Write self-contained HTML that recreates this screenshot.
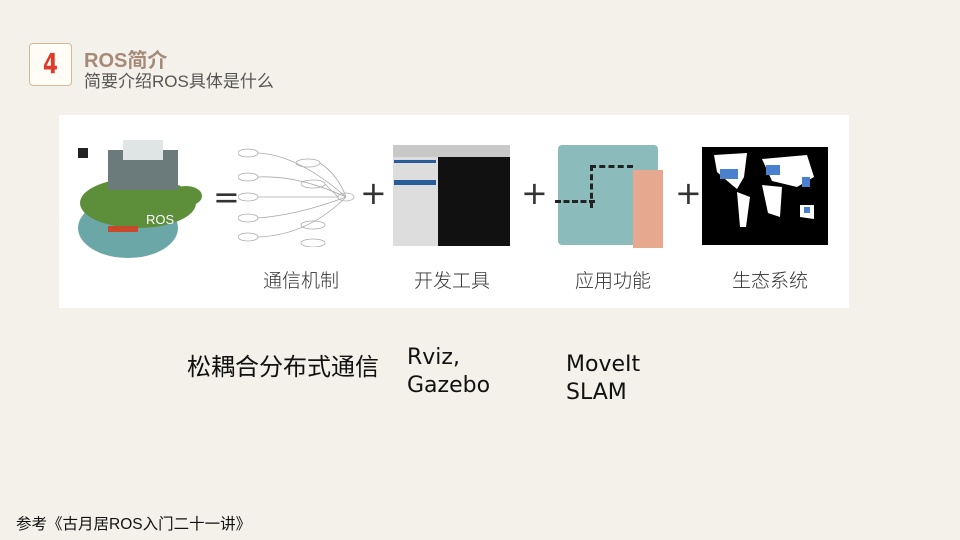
<!DOCTYPE html>
<html><head><meta charset="utf-8"><style>
body{margin:0;width:960px;height:540px;background:#f3f1ea;position:relative;overflow:hidden;font-family:"Liberation Sans","Noto Sans CJK SC",sans-serif}
.a{position:absolute}
.cap{position:absolute;top:266px;font-size:19px;color:#333;font-family:"Noto Sans CJK SC",sans-serif;font-weight:300}
.plus{position:absolute;top:176px;font-size:32px;color:#333;line-height:34px;font-family:"DejaVu Sans",sans-serif}
.big{position:absolute;font-size:22px;color:#111;line-height:28px;font-family:"DejaVu Sans","Noto Sans CJK SC",sans-serif}
</style></head><body>
<div class="a" style="left:29px;top:43px;width:41px;height:41px;background:#fffdf5;border:1px solid #d4b89a;border-radius:4px"></div>
<div class="a" style="left:29px;top:47px;width:43px;text-align:center;font-size:28px;font-weight:bold;color:#e03a2a;font-family:'DejaVu Sans Condensed','Liberation Sans',sans-serif;transform:scaleX(0.85)">4</div>
<div class="a" style="left:84px;top:44px;font-size:20px;font-weight:bold;color:#a58a7a">ROS简介</div>
<div class="a" style="left:84px;top:67px;font-size:17px;color:#555">简要介绍ROS具体是什么</div>

<div class="a" style="left:59px;top:115px;width:790px;height:193px;background:#fff"></div>
<!-- turtle -->
<svg class="a" style="left:68px;top:128px" width="140" height="136">
<ellipse cx="60" cy="100" rx="50" ry="30" fill="#6aa7a6"/>
<ellipse cx="70" cy="75" rx="58" ry="25" fill="#5d8f3a"/>
<ellipse cx="118" cy="68" rx="16" ry="10" fill="#5d8f3a"/>
<rect x="40" y="22" width="70" height="40" fill="#6b7a7a"/>
<rect x="55" y="12" width="40" height="20" fill="#dfe5e5"/>
<rect x="10" y="20" width="10" height="10" fill="#222"/>
<text x="78" y="96" font-size="13" fill="#fff" font-family="Liberation Sans">ROS</text>
<rect x="40" y="98" width="30" height="6" fill="#c94a2a"/>
</svg>
<div class="a" style="left:213px;top:178px;font-size:32px;color:#333;font-family:'DejaVu Sans',sans-serif">=</div>
<!-- graph -->
<svg class="a" style="left:238px;top:145px" width="120" height="102" stroke="#aaa" fill="none" stroke-width="0.8">
<ellipse cx="10" cy="8" rx="10" ry="4"/><ellipse cx="10" cy="32" rx="10" ry="4"/><ellipse cx="10" cy="52" rx="10" ry="4"/><ellipse cx="10" cy="73" rx="10" ry="4"/><ellipse cx="10" cy="92" rx="10" ry="4"/>
<ellipse cx="70" cy="18" rx="12" ry="4"/><ellipse cx="75" cy="39" rx="12" ry="4"/><ellipse cx="75" cy="80" rx="12" ry="4"/><ellipse cx="75" cy="98" rx="12" ry="4"/>
<ellipse cx="108" cy="52" rx="8" ry="4"/>
<path d="M20 8 Q60 10 108 52 M20 32 Q60 30 108 52 M20 52 L100 52 M20 73 Q60 70 108 52 M20 92 Q70 90 108 52 M82 18 Q100 30 108 52 M87 39 L100 52"/>
</svg>
<div class="plus" style="left:360px">+</div>
<!-- rviz -->
<div class="a" style="left:393px;top:145px;width:117px;height:101px;background:#ddd"></div>
<div class="a" style="left:393px;top:145px;width:117px;height:12px;background:#c8c8c8"></div>
<div class="a" style="left:394px;top:160px;width:42px;height:3px;background:#2a5c9a"></div>
<div class="a" style="left:394px;top:180px;width:42px;height:5px;background:#2a5c9a"></div>
<div class="a" style="left:438px;top:157px;width:72px;height:89px;background:#111"></div>
<!-- teal -->
<div class="a" style="left:558px;top:145px;width:100px;height:100px;background:#8bbcbb;border-radius:4px"></div>
<div class="a" style="left:590px;top:165px;width:40px;height:40px;border:3px dashed #222;border-right:none;border-bottom:none"></div>
<div class="a" style="left:555px;top:200px;width:40px;height:0;border-top:3px dashed #222"></div>
<div class="a" style="left:633px;top:170px;width:30px;height:78px;background:#e6a98f"></div>
<div class="plus" style="left:521px">+</div>
<div class="plus" style="left:675px">+</div>
<!-- map -->
<div class="a" style="left:702px;top:147px;width:126px;height:98px;background:#000"></div>
<svg class="a" style="left:702px;top:147px" width="126" height="98" fill="#fff">
<path d="M12 8 L45 6 L42 30 L35 42 L30 38 L15 25 Z"/><path d="M35 45 L48 50 L44 80 L38 80 Z"/>
<path d="M60 12 L105 8 L112 30 L95 40 L70 34 Z"/><path d="M60 38 L80 40 L78 70 L66 66 Z"/><path d="M98 58 L112 58 L112 72 L98 70Z"/>
<g fill="#4a80d0"><rect x="18" y="22" width="18" height="10"/><rect x="64" y="18" width="14" height="10"/><rect x="100" y="30" width="8" height="10"/><rect x="102" y="60" width="6" height="6"/></g>
</svg>

<div class="cap" style="left:263px">通信机制</div>
<div class="cap" style="left:414px">开发工具</div>
<div class="cap" style="left:575px">应用功能</div>
<div class="cap" style="left:732px">生态系统</div>

<div class="big" style="left:187px;top:351px;font-size:24px;font-family:'Noto Sans CJK SC',sans-serif">松耦合分布式通信</div>
<div class="big" style="left:407px;top:344px">Rviz,<br>Gazebo</div>
<div class="big" style="left:566px;top:351px">MoveIt<br>SLAM</div>
<div class="a" style="left:16px;top:515px;font-size:15.5px;color:#111;line-height:20px">参考《古月居ROS入门二十一讲》</div>
</body></html>
